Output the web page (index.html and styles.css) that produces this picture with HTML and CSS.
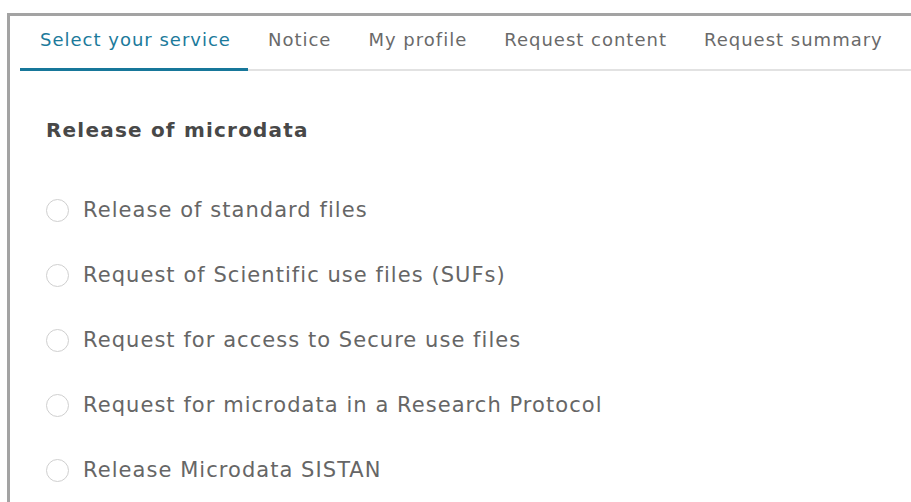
FILE: index.html
```html
<!DOCTYPE html>
<html lang="en">
<head>
<meta charset="utf-8">
<title>Select your service</title>
<link rel="stylesheet" href="styles.css">
</head>
<body>
<div class="frame">
  <nav class="tabs">
    <a class="tab active" href="#">Select your service</a>
    <a class="tab" href="#">Notice</a>
    <a class="tab" href="#">My profile</a>
    <a class="tab" href="#">Request content</a>
    <a class="tab" href="#">Request summary</a>
  </nav>
  <section class="panel">
    <h2 class="panel-title">Release of microdata</h2>
    <ul class="options">
      <li class="option"><span class="radio"></span><span class="label">Release of standard files</span></li>
      <li class="option"><span class="radio"></span><span class="label">Request of Scientific use files (SUFs)</span></li>
      <li class="option"><span class="radio"></span><span class="label">Request for access to Secure use files</span></li>
      <li class="option"><span class="radio"></span><span class="label">Request for microdata in a Research Protocol</span></li>
      <li class="option"><span class="radio"></span><span class="label">Release Microdata SISTAN</span></li>
    </ul>
  </section>
</div>
</body>
</html>
```
FILE: styles.css
```css
html, body {
  margin: 0;
  padding: 0;
  background: #fff;
  overflow: hidden;
}

body {
  font-family: "DejaVu Sans", "Liberation Sans", sans-serif;
}

.frame {
  margin: 13px 0 0 7px;
  border-top: 3px solid #a3a3a3;
  border-left: 3px solid #a3a3a3;
  padding-left: 10px;
  height: 486px;
  overflow: hidden;
}

.tabs {
  display: flex;
  border-bottom: 2px solid #e2e2e2;
  white-space: nowrap;
}

.tab {
  display: block;
  padding: 14px 17px 18px 20px;
  margin-bottom: -2px;
  border-bottom: 3px solid transparent;
  font-size: 18px;
  line-height: 20px;
  letter-spacing: 1px;
  color: #6a6a6a;
  text-decoration: none;
}

.tab.active {
  color: #1b7a9b;
  border-bottom-color: #17779a;
}

.panel {
  padding: 0 0 0 26px;
}

.panel-title {
  margin: 46px 0 0;
  font-size: 20px;
  line-height: 26px;
  font-weight: 600;
  letter-spacing: 1.2px;
  color: #484848;
}

.options {
  list-style: none;
  margin: 55px 0 0;
  padding: 0;
  display: flex;
  flex-direction: column;
  gap: 41px;
}

.option {
  display: flex;
  align-items: center;
  height: 24px;
  gap: 14px;
}

.radio {
  flex: none;
  width: 21px;
  height: 21px;
  border: 1px solid #cfcfcf;
  border-radius: 50%;
  background: #fff;
}

.label {
  font-size: 21px;
  line-height: 24px;
  letter-spacing: 1.05px;
  color: #666;
}
```
